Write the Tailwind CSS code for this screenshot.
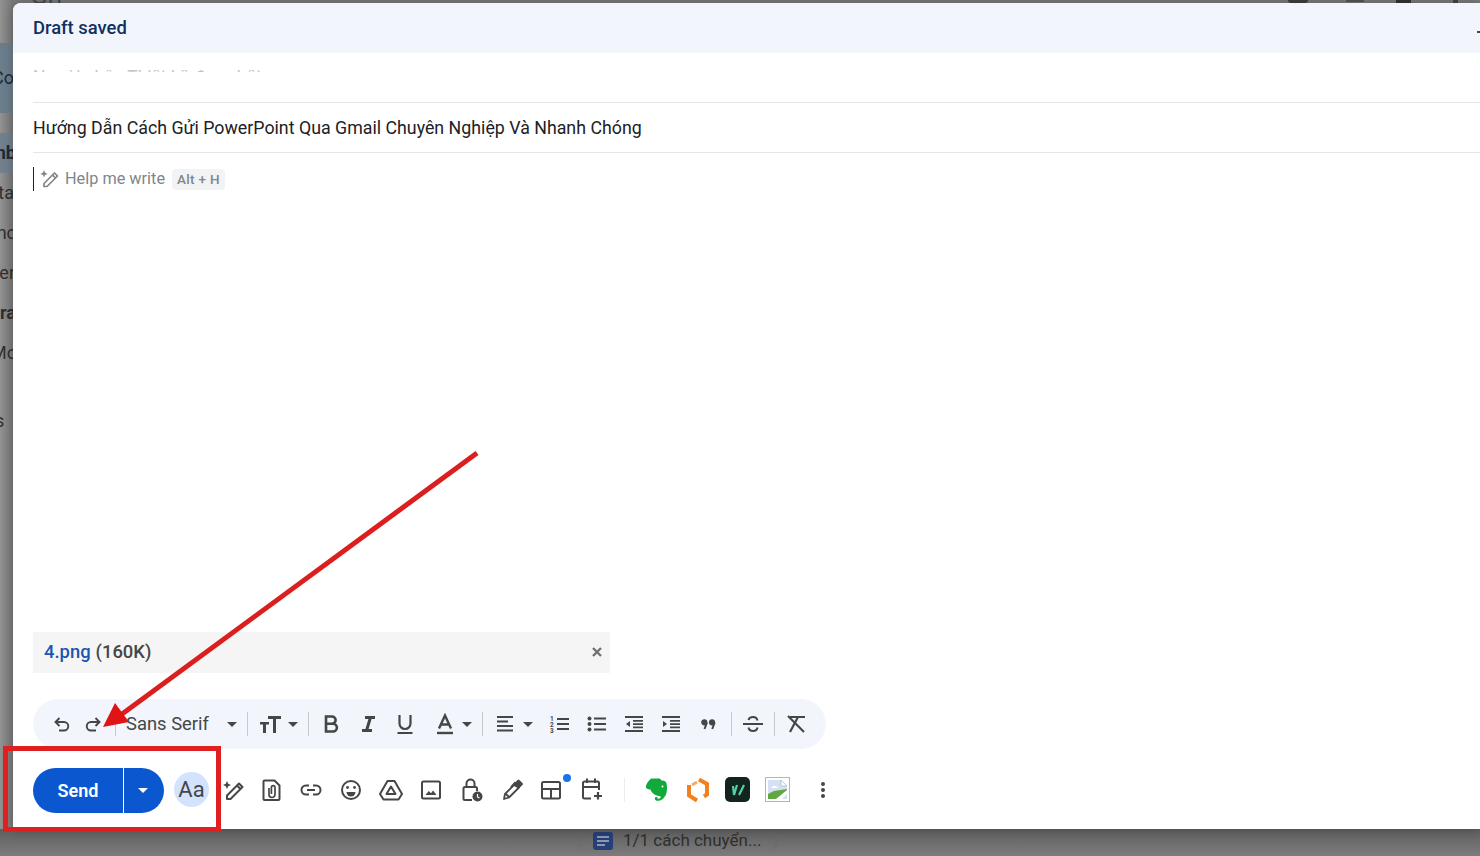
<!doctype html>
<html>
<head>
<meta charset="utf-8">
<script src="https://cdn.jsdelivr.net/npm/@tailwindcss/browser@4"></script>
</head>
<body class="m-0 p-0">
<div class="relative w-[1480px] h-[856px] overflow-hidden bg-[#7b7b7b] font-['Roboto','Liberation_Sans',sans-serif]">
  <!-- dimmed page behind the dialog -->
  <div class="w-[13px] h-full flex flex-col bg-gradient-to-r from-[#929292] to-[#787878] text-[#2f2f2f] text-[18px]">
    <div class="h-[3px] overflow-hidden"></div>
    <div class="h-[40px]"></div>
    <div class="h-[70px] bg-[#6c7e8c] flex items-center justify-end overflow-hidden whitespace-nowrap text-[#1d2b36] pb-[2px]"><span class="-mr-[1px]">Co</span></div>
    <div class="h-[20px]"></div>
    <div class="h-[40px] bg-[#72818e] flex items-center justify-end overflow-hidden whitespace-nowrap font-bold text-[#1d2b36] pb-[1px]"><span class="-mr-[3px]">nb</span></div>
    <div class="h-[40px] flex items-center justify-end overflow-hidden whitespace-nowrap pb-[2px]"><span class="-mr-[1px]">ta</span></div>
    <div class="h-[40px] flex items-center justify-end overflow-hidden whitespace-nowrap pb-[2px]"><span class="-mr-[3px]">nc</span></div>
    <div class="h-[40px] flex items-center justify-end overflow-hidden whitespace-nowrap pb-[2px]"><span class="-mr-[2px]">er</span></div>
    <div class="h-[40px] flex items-center justify-end overflow-hidden whitespace-nowrap font-bold pb-[2px]"><span class="-mr-[3px]">Dra</span></div>
    <div class="h-[40px] flex items-center justify-end overflow-hidden whitespace-nowrap pb-[2px]"><span class="-mr-[4px]">Mo</span></div>
    <div class="h-[28px]"></div>
    <div class="h-[40px] flex items-center overflow-hidden whitespace-nowrap pb-[2px]"><span class="-ml-[5px]">s</span></div>
  </div>

  <!-- top sliver of page -->
  <div class="absolute left-[30px] top-0 h-[3px] w-[34px] overflow-hidden flex items-end text-[26px] leading-none text-[#4a4a4a]"><span class="-mb-[5px]">Gmail</span></div>
  <div class="absolute left-[1288px] top-0 h-[3px] w-[180px] flex">
    <span class="w-[20px] h-[3px] bg-[#3f3f3f] rounded-b-full"></span>
    <span class="ml-[38px] w-[18px] h-[2px] bg-[#555]"></span>
    <span class="ml-[32px] w-[15px] h-[3px] bg-[#333]"></span>
    <span class="ml-[42px] w-[5px] h-[3px] bg-[#444]"></span>
  </div>

  <!-- bottom tab behind -->
  <div class="absolute left-0 right-0 bottom-0 h-[27px] bg-gradient-to-b from-[#5f5f5f] to-[#7c7c7c]">
    <div class="absolute left-[578px] top-0 w-[200px] h-[22px] flex items-start rounded-[14px] border-x border-[#6a6a6a]">
      <span class="ml-[14px] mt-[3px] w-[20px] h-[18px] bg-[#263f76] rounded-[3px] flex flex-col gap-[2px] justify-center px-[4px]">
        <span class="h-[2px] bg-[#8b97ad]"></span><span class="h-[2px] bg-[#8b97ad]"></span><span class="h-[2px] w-[8px] bg-[#8b97ad]"></span>
      </span>
      <span class="ml-[10px] text-[17px] leading-[22px] text-[#2e2e2e] whitespace-nowrap">1/1 cách chuyển...</span>
    </div>
  </div>

  <!-- compose dialog -->
  <div class="absolute left-[13px] top-[3px] right-0 bottom-[27px] bg-white rounded-tl-[8px] flex flex-col shadow-[0_0_12px_rgba(0,0,0,0.25)]">
    <div class="h-[50px] shrink-0 bg-[#f2f6fc] rounded-tl-[8px] flex items-center pl-[20px] relative">
      <span class="text-[18.4px] font-medium text-[#10305f]">Draft saved</span>
      <span class="absolute right-0 top-[28px] w-[3px] h-[2px] bg-[#444]"></span>
    </div>
    <div class="h-[50px] shrink-0 ml-[20px] border-b border-[#e3e5e7] pt-[17px]">
      <div class="h-[2px] overflow-hidden text-[17.5px] leading-[24px] text-[#c4c4c4] whitespace-nowrap"><div class="-mt-[5px]">Người nhận Thiết kế đẹp nhất</div></div>
    </div>
    <div class="h-[50px] shrink-0 ml-[20px] border-b border-[#e3e5e7] flex items-center pt-[2px] text-[17.8px] text-[#202124]">Hướng Dẫn Cách Gửi PowerPoint Qua Gmail Chuyên Nghiệp Và Nhanh Chóng</div>

    <div class="flex-1 flex flex-col pl-[20px]">
      <div class="flex items-center mt-[14px] h-[24px]">
        <span class="w-px h-[24px] bg-[#202124]"></span>
        <svg class="ml-[6px]" width="20" height="20" viewBox="0 0 20 20" fill="none" stroke="#80868b" stroke-width="1.7"><path d="M4 17.500v-3L14.500 4l3 3L7 17.500z" stroke-linejoin="round"/><path d="M12.500 6l3 3"/><path d="M4 1l1 2.600L7.600 5 5 6 4 8.600 3 6 .4 5 3 3.600z" fill="#80868b" stroke="none"/></svg>
        <span class="ml-[5px] text-[16.3px] text-[#80868b]">Help me write</span>
        <span class="ml-[7px] h-[21px] px-[5px] rounded-[4px] bg-[#f1f3f4] flex items-center text-[13.5px] font-medium text-[#80868b] whitespace-pre tracking-[0.3px]">Alt + H</span>
      </div>

      <div class="mt-auto w-[577px] h-[41px] bg-[#f5f5f5] flex items-center pl-[11px] pr-[7px] pb-[2px] text-[18.4px] font-medium">
        <span class="text-[#1a57b0]">4.png</span>
        <span class="ml-[5px] text-[#444746]">(160K)</span>
        <svg class="ml-auto" width="12" height="12" viewBox="0 0 12 12" stroke="#6f7275" stroke-width="2.400"><path d="M2 2l8 8M10 2l-8 8"/></svg>
      </div>

      <!-- formatting toolbar -->
      <div class="mt-[26px] w-[793px] h-[50px] rounded-full bg-[#f2f6fc] flex items-center text-[#444746]">
        <span class="ml-[13px] w-[32px] flex justify-center"><svg width="20" height="20" viewBox="0 0 20 20" fill="none" stroke="#444746" stroke-width="1.900"><path d="M7.500 4 3.500 8l4 4"/><path d="M3.500 8H12a4.200 4.200 0 0 1 0 8.500H7"/></svg></span>
        <span class="w-[30px] flex justify-center"><svg width="20" height="20" viewBox="0 0 20 20" fill="none" stroke="#444746" stroke-width="1.900"><path d="M12.500 4l4 4-4 4"/><path d="M16.500 8H8a4.200 4.200 0 0 0 0 8.500h5"/></svg></span>
        <span class="ml-[7px] w-px h-[24px] bg-[#c7c9cc]"></span>
        <span class="ml-[10px] w-[96px] text-[18.4px] text-[#444746] whitespace-nowrap">Sans Serif</span>
        <span class="w-[20px] flex justify-center"><span class="w-0 h-0 border-x-[5px] border-x-transparent border-t-[5px] border-t-[#444746]"></span></span>
        <span class="ml-[5px] w-px h-[24px] bg-[#c7c9cc]"></span>
        <span class="ml-[10px] w-[24px] flex justify-center"><svg width="24" height="20" viewBox="0 0 24 20" fill="#444746"><path d="M10 2h13v3h-5v14h-3V5h-5z"/><path d="M2 8h9v2.600H8V19H5v-8.400H2z"/></svg></span>
        <span class="ml-[1px] w-[20px] flex justify-center"><span class="w-0 h-0 border-x-[5px] border-x-transparent border-t-[5px] border-t-[#444746]"></span></span>
        <span class="ml-[5px] w-px h-[24px] bg-[#c7c9cc]"></span>
        <span class="ml-[4px] w-[36px] flex justify-center"><svg width="20" height="20" viewBox="0 0 20 20" fill="none" stroke="#444746" stroke-width="2.600"><path d="M5 2.500h6a3.600 3.600 0 0 1 0 7.200H5zM5 9.700h7a3.900 3.900 0 0 1 0 7.800H5z"/></svg></span>
        <span class="w-[38px] flex justify-center"><svg width="20" height="20" viewBox="0 0 20 20" fill="#444746"><path d="M7 2h10v3h-3.400l-3 10H14v3H4v-3h3.400l3-10H7z"/></svg></span>
        <span class="w-[36px] flex justify-center"><svg width="20" height="22" viewBox="0 0 20 22" fill="none" stroke="#444746" stroke-width="2.200"><path d="M4.500 2v8.500a5.500 5.500 0 0 0 11 0V2"/><path d="M2.500 20h15" stroke-width="2"/></svg></span>
        <span class="ml-[8px] w-[28px] flex justify-center"><svg width="20" height="22" viewBox="0 0 20 22" fill="none" stroke="#444746" stroke-width="2.400"><path d="M4 15.500 10 2.500l6 13M6 11.500h8"/><path d="M2 20h16" stroke-width="2.400"/></svg></span>
        <span class="w-[16px] flex justify-center"><span class="w-0 h-0 border-x-[5px] border-x-transparent border-t-[5px] border-t-[#444746]"></span></span>
        <span class="ml-[7px] w-px h-[24px] bg-[#c7c9cc]"></span>
        <span class="ml-[8px] w-[28px] flex justify-center"><svg width="20" height="20" viewBox="0 0 20 20" stroke="#444746" stroke-width="2"><path d="M2 3h16M2 7.500h11M2 12h16M2 16.500h16"/></svg></span>
        <span class="w-[18px] flex justify-center"><span class="w-0 h-0 border-x-[5px] border-x-transparent border-t-[5px] border-t-[#444746]"></span></span>
        <span class="ml-[4px] w-[37px] flex justify-center"><svg width="20" height="20" viewBox="0 0 20 20" fill="#444746"><path d="M7 4h12v2H7zM7 9h12v2H7zM7 14h12v2H7z"/><text x="0" y="6.500" font-size="6.500" font-weight="700" font-family="Roboto">1</text><text x="0" y="12.500" font-size="6.500" font-weight="700" font-family="Roboto">2</text><text x="0" y="18.500" font-size="6.500" font-weight="700" font-family="Roboto">3</text></svg></span>
        <span class="w-[37px] flex justify-center"><svg width="20" height="20" viewBox="0 0 20 20" fill="#444746"><circle cx="2.500" cy="4.500" r="2"/><circle cx="2.500" cy="10" r="2"/><circle cx="2.500" cy="15.500" r="2"/><path d="M7 3.500h12v2H7zM7 9h12v2H7zM7 14.500h12v2H7z"/></svg></span>
        <span class="w-[37px] flex justify-center"><svg width="20" height="20" viewBox="0 0 20 20" fill="#444746"><path d="M1 2h18v2H1zM9 6h10v1.800H9zM9 9.200h10V11H9zM9 12.400h10v1.800H9zM1 16h18v2H1zM6 7v6l-4-3z"/></svg></span>
        <span class="w-[37px] flex justify-center"><svg width="20" height="20" viewBox="0 0 20 20" fill="#444746"><path d="M1 2h18v2H1zM9 6h10v1.800H9zM9 9.200h10V11H9zM9 12.400h10v1.800H9zM1 16h18v2H1zM2 7v6l4-3z"/></svg></span>
        <span class="w-[37px] flex justify-center pl-[2px]"><svg width="15" height="11" viewBox="0 0 15 11" fill="none" stroke="#444746"><circle cx="3.300" cy="3.300" r="1.900" stroke-width="2.400" fill="#444746"/><path d="M6 3.500 3.500 10" stroke-width="2"/><circle cx="11" cy="3.300" r="1.900" stroke-width="2.400" fill="#444746"/><path d="M13.700 3.500 11.200 10" stroke-width="2"/></svg></span>
        <span class="ml-[5px] w-px h-[24px] bg-[#c7c9cc]"></span>
        <span class="ml-[3px] w-[36px] flex justify-center"><svg width="22" height="20" viewBox="0 0 22 20" fill="none" stroke="#444746" stroke-width="2"><path d="M1 10h20"/><path d="M15.500 6.500C15 4 13.200 3 11 3S7 4 6.500 6M6.500 13.500C7 16 8.800 17 11 17s4-1 4.500-3.500"/></svg></span>
        <span class="ml-[3px] w-px h-[24px] bg-[#c7c9cc]"></span>
        <span class="ml-[3px] w-[36px] flex justify-center"><svg width="22" height="20" viewBox="0 0 22 20" fill="none" stroke="#444746" stroke-width="2.200"><path d="M3 2l16 16"/><path d="M5 3h15M13 3 5 18"/></svg></span>
      </div>

      <!-- action row -->
      <div class="mt-[19px] flex items-center h-[45px] pb-[2px] relative">
        <div class="w-[131px] h-[45px] -mb-[2px] rounded-full bg-[#0b57d0] flex text-white overflow-hidden">
          <span class="w-[90px] flex items-center justify-center pb-[1px] text-[18px] font-semibold">Send</span>
          <span class="w-px bg-white"></span>
          <span class="flex-1 flex items-center justify-center pr-[3px]"><span class="w-0 h-0 border-x-[5px] border-x-transparent border-t-[5px] border-t-white"></span></span>
        </div>
        <span class="ml-[10px] w-[35px] h-[35px] rounded-full bg-[#d3e3fd] flex items-center justify-center text-[22px] text-[#444746]">Aa</span>

        <span class="ml-[4px] w-[40px] flex justify-center"><svg width="24" height="24" viewBox="0 0 24 24" fill="none" stroke="#444746" stroke-width="2"><path d="M6 21v-3.500L18 5.500l3.500 3.500L9.500 21z" stroke-linejoin="round"/><path d="M16 7.500l3.500 3.500"/><path d="M6 3l1.200 2.800L10 7 7.200 8.200 6 11 4.800 8.200 2 7l2.800-1.200z" fill="#444746" stroke="none"/></svg></span>
        <span class="w-[38px] flex justify-center"><svg width="22" height="24" viewBox="0 0 22 24" fill="none" stroke="#444746" stroke-width="2"><path d="M3.500 2.500h10l5 5V21a1 1 0 0 1-1 1h-14a1 1 0 0 1-1-1V3.500a1 1 0 0 1 1-1z" stroke-linejoin="round"/><path d="M8 10v6.500a3 3 0 0 0 6 0V9.500a1.800 1.800 0 0 0-3.600 0V16" stroke-width="1.700"/></svg></span>
        <span class="w-[40px] flex justify-center"><svg width="24" height="24" viewBox="0 0 24 24" fill="none" stroke="#444746" stroke-width="2"><path d="M10 7.500H7a4.500 4.500 0 0 0 0 9h3M14 7.500h3a4.500 4.500 0 0 1 0 9h-3M8 12h8"/></svg></span>
        <span class="w-[40px] flex justify-center"><svg width="24" height="24" viewBox="0 0 24 24" fill="none" stroke="#444746" stroke-width="2"><circle cx="12" cy="12" r="9"/><circle cx="8.500" cy="9.500" r="1.400" fill="#444746" stroke="none"/><circle cx="15.500" cy="9.500" r="1.400" fill="#444746" stroke="none"/><path d="M7.500 14h9a4.500 4.500 0 0 1-9 0z" fill="#444746" stroke="none"/></svg></span>
        <span class="w-[40px] flex justify-center"><svg width="24" height="24" viewBox="0 0 24 24" fill="none" stroke="#444746" stroke-width="2" stroke-linejoin="round"><path d="M8.500 3h7L23 16l-3.500 5.500h-15L1 16z"/><path d="M12 8.500 16.500 16h-9z"/></svg></span>
        <span class="w-[40px] flex justify-center"><svg width="24" height="24" viewBox="0 0 24 24" fill="none" stroke="#444746" stroke-width="2"><rect x="3" y="3.500" width="18" height="17" rx="1.500"/><path d="M6.500 17l3.300-4 2.200 2.200 2-2.700 3.500 4.500z" fill="#444746" stroke="none"/></svg></span>
        <span class="w-[41px] flex justify-center"><svg width="24" height="26" viewBox="0 0 24 26" fill="none" stroke="#444746" stroke-width="2"><path d="M12 23H5a1.500 1.500 0 0 1-1.500-1.500V11.500A1.500 1.500 0 0 1 5 10h10.500a1.500 1.500 0 0 1 1.500 1.500V14"/><path d="M6.500 10V6.500a4 4 0 0 1 8 0V10"/><circle cx="17.500" cy="19.500" r="5" fill="#444746" stroke="none"/><path d="M17.500 17v3l2 1" stroke="#fff" stroke-width="1.200"/></svg></span>
        <span class="w-[39px] flex justify-center"><svg width="24" height="24" viewBox="0 0 24 24" fill="none" stroke="#444746" stroke-width="1.800" stroke-linejoin="round"><path d="M4 21l1-5L15 6l4 3.500L9 19.500z"/><path d="M14 7 18.500 2.500 22 6l-3.500 3.500z" fill="#444746"/><path d="M11 9l4.500-5"/><path d="M6 16l3 3"/></svg></span>
        <span class="w-[40px] flex justify-center relative"><svg width="24" height="24" viewBox="0 0 24 24" fill="none" stroke="#444746" stroke-width="2"><rect x="3" y="4" width="18" height="16.500" rx="1.500"/><path d="M3 11h18M12 11v9.500"/></svg><span class="absolute left-[32px] -top-[4px] w-[8px] h-[8px] rounded-full bg-[#1a73e8]"></span></span>
        <span class="w-[41px] flex justify-center"><svg width="24" height="26" viewBox="0 0 24 26" fill="none" stroke="#444746" stroke-width="2"><path d="M11 21.500H4.500A1.500 1.500 0 0 1 3 20V6a1.500 1.500 0 0 1 1.500-1.500h13A1.500 1.500 0 0 1 19 6v7M3 10h16M7 1.500V6M15 1.500V6"/><path d="M18 15v7.500M14 19h8" stroke-width="2.200"/></svg></span>
        <span class="ml-[12px] w-px h-[24px] bg-[#ececec]"></span>
        <span class="ml-[17px] w-[30px] flex justify-center"><svg width="24" height="26" viewBox="0 0 24 26" fill="#12a93c"><path d="M6 1.500h7c2 0 3 .6 3.300 2 2.700 0 4.200.6 5 2.200.9 2.300 1 6.200.2 10-.6 3-2.800 5.700-4.500 6.800-1.700 1.100-4.200 1.800-6 1-1.500-.7-1.600-2.800-.3-3.400 1.200-.5 2.600.5 1.700 1.700 1.500.3 3.300-.6 3.700-2-1.800-.7-5-1-6.600-2.200C7 16 6 14 5.500 12.500c-1.800 0-3.800-.6-4.500-1.800C.5 8.500 2 5.500 6 1.500z"/><circle cx="17.500" cy="9.500" r="1" fill="#fff"/></svg></span>
        <span class="ml-[11px] w-[30px] flex justify-center"><svg width="24" height="26" viewBox="0 0 24 26" fill="none" stroke="#f2801f" stroke-width="4" stroke-linejoin="miter"><path d="M13 2.500l8 4.500v10.500l-3 2"/><path d="M3 8v10.500l8 5"/><path d="M11 5 6 8" stroke-width="3" stroke="#f9a867"/></svg></span>
        <span class="ml-[12px] w-[25px] h-[25px] rounded-[5px] bg-[#13241f] flex items-center justify-center"><svg width="16" height="14" viewBox="0 0 16 14" fill="none" stroke="#4fd1a5" stroke-width="2.200"><path d="M3 3l1 9 3-10M9 12l5-10"/></svg></span>
        <span class="ml-[15px] w-[25px] h-[25px] border border-[#b5b5b5] bg-white flex items-center justify-center"><svg width="21" height="21" viewBox="0 0 21 21"><path d="M1 1h13l6 6v13H1z" fill="#d4e1f5"/><path d="M14 1v6h6z" fill="#fff" stroke="#aaa" stroke-width=".6"/><path d="M4 9c2-3 5-3 7 0z" fill="#fff"/><path d="M1 20v-5l6-3 13-2v4L9 20z" fill="#5fa83f"/><path d="M9 20 20 11v4l-5 5z" fill="#fff"/></svg></span>
        <span class="ml-[23px] w-[20px] flex flex-col items-center gap-[2px]"><span class="w-[4px] h-[4px] rounded-full bg-[#444746]"></span><span class="w-[4px] h-[4px] rounded-full bg-[#444746]"></span><span class="w-[4px] h-[4px] rounded-full bg-[#444746]"></span></span>
      </div>
      <div class="h-[16px]"></div>
    </div>
  </div>

  <!-- annotation -->
  <div class="absolute left-[3px] top-[746px] w-[218px] h-[86px] border-[5px] border-[#e02020]"></div>
  <svg class="absolute left-0 top-0 pointer-events-none" width="1480" height="856" viewBox="0 0 1480 856">
    <path d="M477 453 118 717" stroke="#db1f1f" stroke-width="5" fill="none"/>
    <path d="M103 727 115 703 129 722z" fill="#e01414"/>
  </svg>
</div>
</body>
</html>
